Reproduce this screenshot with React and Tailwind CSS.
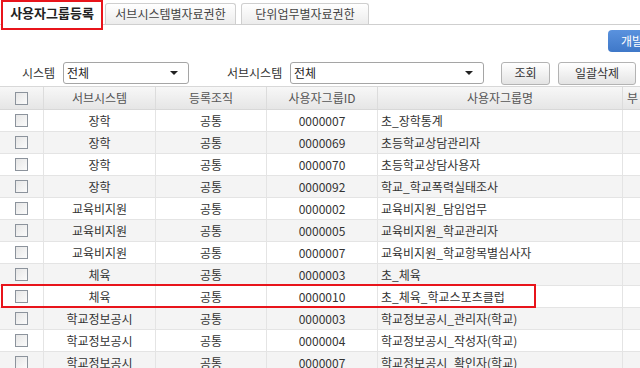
const rows = [
  ['장학', '공통', '0000007', '초_장학통계'],
  ['장학', '공통', '0000069', '초등학교상담관리자'],
  ['장학', '공통', '0000070', '초등학교상담사용자'],
  ['장학', '공통', '0000092', '학교_학교폭력실태조사'],
  ['교육비지원', '공통', '0000002', '교육비지원_담임업무'],
  ['교육비지원', '공통', '0000005', '교육비지원_학교관리자'],
  ['교육비지원', '공통', '0000007', '교육비지원_학교항목별심사자'],
  ['체육', '공통', '0000003', '초_체육'],
  ['체육', '공통', '0000010', '초_체육_학교스포츠클럽'],
  ['학교정보공시', '공통', '0000003', '학교정보공시_관리자(학교)'],
  ['학교정보공시', '공통', '0000004', '학교정보공시_작성자(학교)'],
  ['학교정보공시', '공통', '0000007', '학교정보공시_확인자(학교)'],
]

const cols = 'grid grid-cols-[44px_112px_111px_111px_245px_1fr]'

function Check() {
  return (
    <span className="block w-[13px] h-[13px] border border-[#8c939c] bg-gradient-to-br from-[#e6e6e6] to-[#fbfbfb]" />
  )
}

function Select({ width }) {
  return (
    <div className={`${width} h-[22px] border border-[#a5a5a5] rounded-[3px] bg-white flex items-center justify-between pl-[3px] pr-[10px]`}>
      <span className="text-[12px] text-[#222]">전체</span>
      <span className="w-0 h-0 border-l-[4px] border-r-[4px] border-t-[4px] border-l-transparent border-r-transparent border-t-[#222]" />
    </div>
  )
}

function Btn({ children, width }) {
  return (
    <button className={`${width} h-[23px] border border-[#b3b3b3] rounded-[3px] bg-gradient-to-b from-white to-[#e4e4e4] text-[12px] text-[#333]`}>
      {children}
    </button>
  )
}

export default function App() {
  return (
    <div className="w-[640px] h-[368px] overflow-hidden bg-white text-[#333] text-[12px] font-['Noto_Sans_CJK_KR','Noto_Sans',sans-serif]">
      {/* 탭 */}
      <div className="relative h-[25px] flex items-end border-b border-[#cfcfcf] pl-[1px]">
        <div className="relative h-[24px] w-[102px] bg-white -mb-px flex items-center justify-center font-bold text-[13px] text-[#222]">
          사용자그룹등록
          <span className="absolute left-0 top-[-1px] w-[102px] h-[30px] border-2 border-[#e8141b]" />
        </div>
        <div className="ml-[2px] h-[21px] w-[131px] border border-b-0 border-[#cfcfcf] rounded-t-[3px] bg-gradient-to-b from-white to-[#ececec] flex items-center justify-center text-[#444]">
          서브시스템별자료권한
        </div>
        <div className="ml-[5px] h-[21px] w-[128px] border border-b-0 border-[#cfcfcf] rounded-t-[3px] bg-gradient-to-b from-white to-[#ececec] flex items-center justify-center text-[#444]">
          단위업무별자료권한
        </div>
      </div>

      {/* 상단 버튼 */}
      <div className="h-[35px] flex justify-end pt-[5px]">
        <div className="w-[40px] h-[22px] rounded-l-[4px] bg-gradient-to-b from-[#5a92de] to-[#3f78c8] text-white flex items-center pl-[13px] -mr-[8px]">
          개발
        </div>
      </div>

      {/* 검색 조건 */}
      <div className="h-[26px] flex items-center">
        <span className="w-[56px] text-right pr-[1px]">시스템</span>
        <div className="ml-[7px]"><Select width="w-[126px]" /></div>
        <span className="ml-[38px] w-[60px] shrink-0">서브시스템</span>
        <div className="ml-[3px]"><Select width="w-[194px]" /></div>
        <div className="ml-[17px]"><Btn width="w-[49px]">조회</Btn></div>
        <div className="ml-[8px]"><Btn width="w-[78px]">일괄삭제</Btn></div>
      </div>

      {/* 목록 */}
      <div>
        <div className={`${cols} h-[24px] bg-gradient-to-b from-[#f7f7f7] to-[#e6e6e6] border-t border-b border-[#d8d8d8] text-[#555]`}>
          <div className="flex items-center justify-center border-r border-[#dcdcdc]"><Check /></div>
          <div className="flex items-center justify-center border-r border-[#dcdcdc]">서브시스템</div>
          <div className="flex items-center justify-center border-r border-[#dcdcdc]">등록조직</div>
          <div className="flex items-center justify-center border-r border-[#dcdcdc]">사용자그룹ID</div>
          <div className="flex items-center justify-center border-r border-[#dcdcdc]">사용자그룹명</div>
          <div className="flex items-center pl-[4px]">부</div>
        </div>
        {rows.map((r, i) => (
          <div
            key={i}
            className={`relative ${cols} h-[22px] border-b border-[#e4e4e4] ${i % 2 === 1 ? 'bg-[#f4f4f4]' : 'bg-white'}`}>
            <div className="flex items-center justify-center border-r border-[#e4e4e4]"><Check /></div>
            <div className="flex items-center justify-center border-r border-[#e4e4e4]">{r[0]}</div>
            <div className="flex items-center justify-center border-r border-[#e4e4e4]">{r[1]}</div>
            <div className="flex items-center justify-center border-r border-[#e4e4e4]">{r[2]}</div>
            <div className="flex items-center pl-[3px] border-r border-[#e4e4e4]">{r[3]}</div>
            <div />
            {i === 8 && (
              <span className="absolute left-[1px] top-[-2px] w-[535px] h-[24px] border-2 border-[#e8141b]" />
            )}
          </div>
        ))}
      </div>
    </div>
  )
}
